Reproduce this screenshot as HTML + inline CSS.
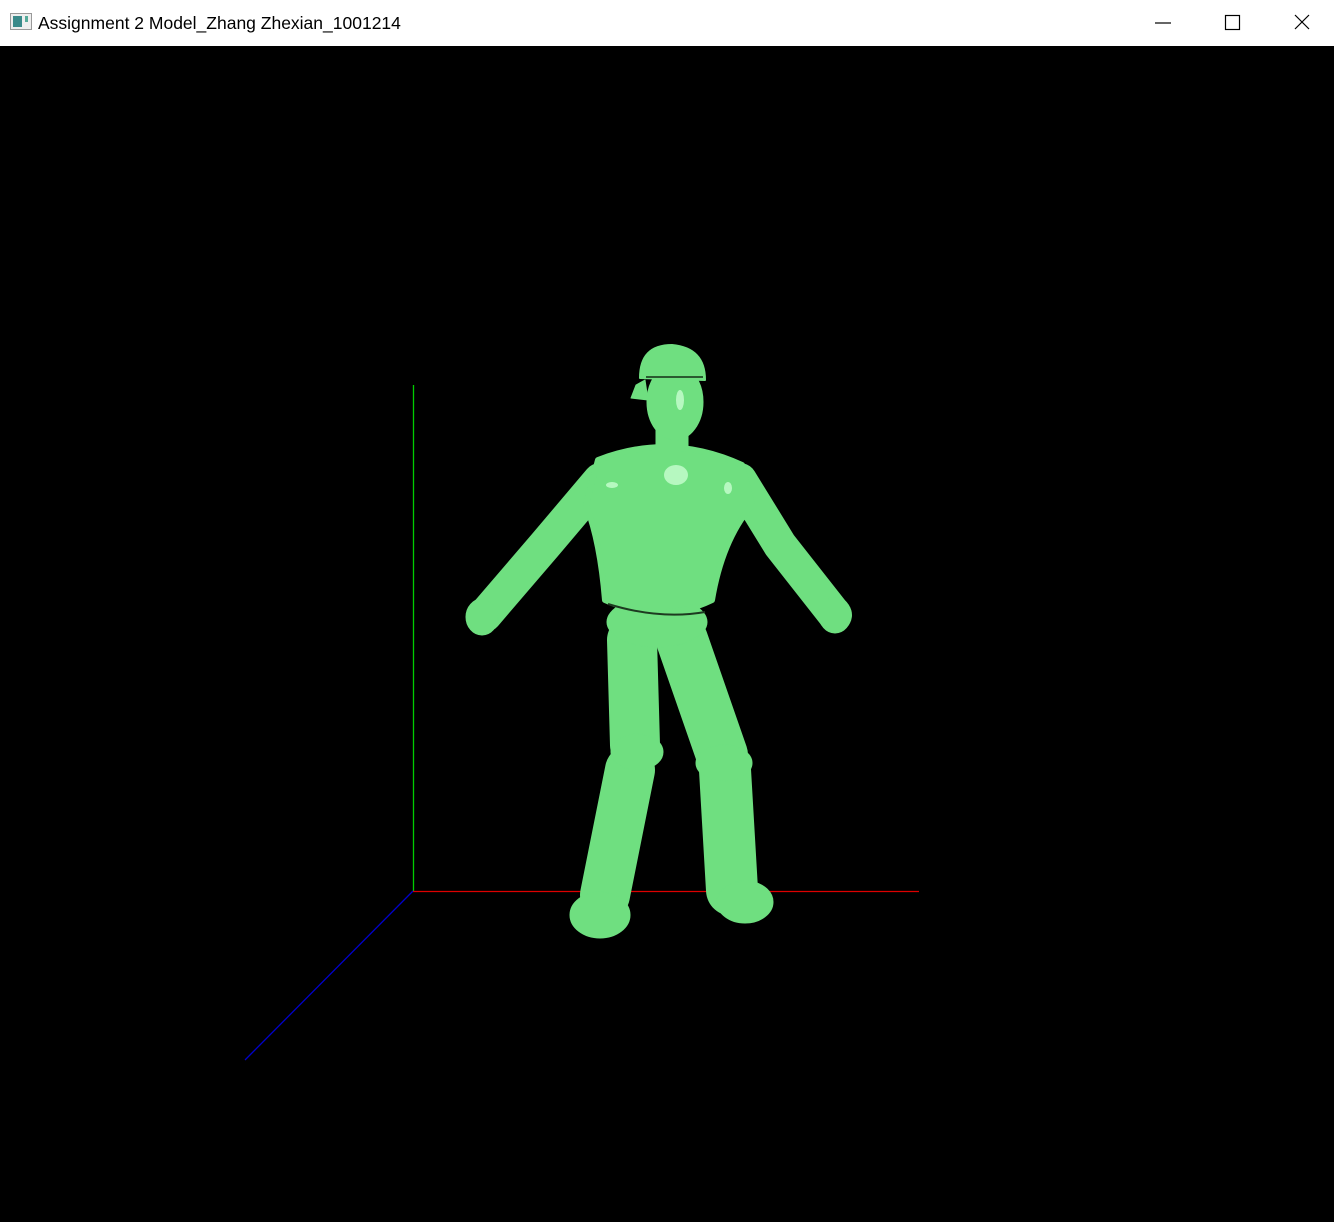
<!DOCTYPE html>
<html><head><style>
html,body{margin:0;padding:0;width:1334px;height:1222px;overflow:hidden;background:#000;font-family:"Liberation Sans",sans-serif}
.tb{position:absolute;left:0;top:0;width:1334px;height:46px;background:#fff}
.tt{position:absolute;left:38px;top:13px;font-size:17.5px;color:#000;font-family:"Liberation Sans",sans-serif}
</style></head><body>
<div class="tb">
<svg style="position:absolute;left:10px;top:13px" width="22" height="18"><rect x="0.5" y="0.5" width="21" height="16" fill="#eee" stroke="#999"/><rect x="3" y="3" width="9" height="11" fill="#3a8a8a"/><rect x="15" y="3" width="3" height="6" fill="#5a9"/></svg>
<div class="tt">Assignment 2 Model_Zhang Zhexian_1001214</div>
<svg style="position:absolute;left:1150px;top:10px" width="170" height="26" fill="none" stroke="#000" stroke-width="1.2">
<line x1="5" y1="13" x2="21" y2="13"/><rect x="75.5" y="5.5" width="14" height="14"/><line x1="145" y1="5" x2="159" y2="19"/><line x1="159" y1="5" x2="145" y2="19"/></svg>
</div>
<svg style="position:absolute;left:0;top:0" width="1334" height="1222">
<line x1="413.5" y1="385" x2="413.5" y2="891" stroke="#0c0" stroke-width="1.3"/>
<line x1="413" y1="891.5" x2="919" y2="891.5" stroke="#d00" stroke-width="1.3"/>
<line x1="413" y1="891" x2="245" y2="1060" stroke="#00c" stroke-width="1.3"/>
<g fill="#6fdf80" stroke="#6fdf80" stroke-linecap="round" stroke-linejoin="round">
<path d="M600 480 L545 545 L485 615" fill="none" stroke-width="34"/>
<path d="M740 480 L780 545 L835 615" fill="none" stroke-width="34"/>
<ellipse cx="482" cy="617" rx="16" ry="18"/><ellipse cx="835" cy="615" rx="16" ry="18"/>
<path d="M632 640 L635 745" fill="none" stroke-width="50"/>
<path d="M682 640 L722 755" fill="none" stroke-width="52"/>
<path d="M630 770 L605 895" fill="none" stroke-width="50"/>
<path d="M725 770 L732 890" fill="none" stroke-width="52"/>
<ellipse cx="637" cy="752" rx="26" ry="18"/><ellipse cx="724" cy="763" rx="28" ry="18"/>
<ellipse cx="600" cy="915" rx="30" ry="23"/><ellipse cx="745" cy="902" rx="28" ry="21"/>
<ellipse cx="657" cy="622" rx="50" ry="25"/>
<path d="M598 460 Q670 432 742 465 L752 505 Q722 540 712 600 Q660 625 605 600 Q600 540 586 505 Z" stroke-width="6"/>
<rect x="656" y="420" width="32" height="30"/>
<ellipse cx="675" cy="402" rx="28" ry="38"/>
<path d="M640 378 Q640 345 672 345 Q705 348 705 380 Z" stroke-width="2"/>
<path d="M636 385 L645 380 L648 400 L631 398 Z"/>
</g>
<line x1="646" y1="377" x2="703" y2="377" stroke="#2a5a30" stroke-width="2"/>
<path d="M608 604 Q660 620 705 612" fill="none" stroke="#1d3a20" stroke-width="2"/>
<g fill="#c8ffd0" opacity="0.8">
<ellipse cx="676" cy="475" rx="12" ry="10"/>
<ellipse cx="612" cy="485" rx="6" ry="3"/>
<ellipse cx="728" cy="488" rx="4" ry="6"/>
<ellipse cx="680" cy="400" rx="4" ry="10"/>
</g>
</svg>
</body></html>
